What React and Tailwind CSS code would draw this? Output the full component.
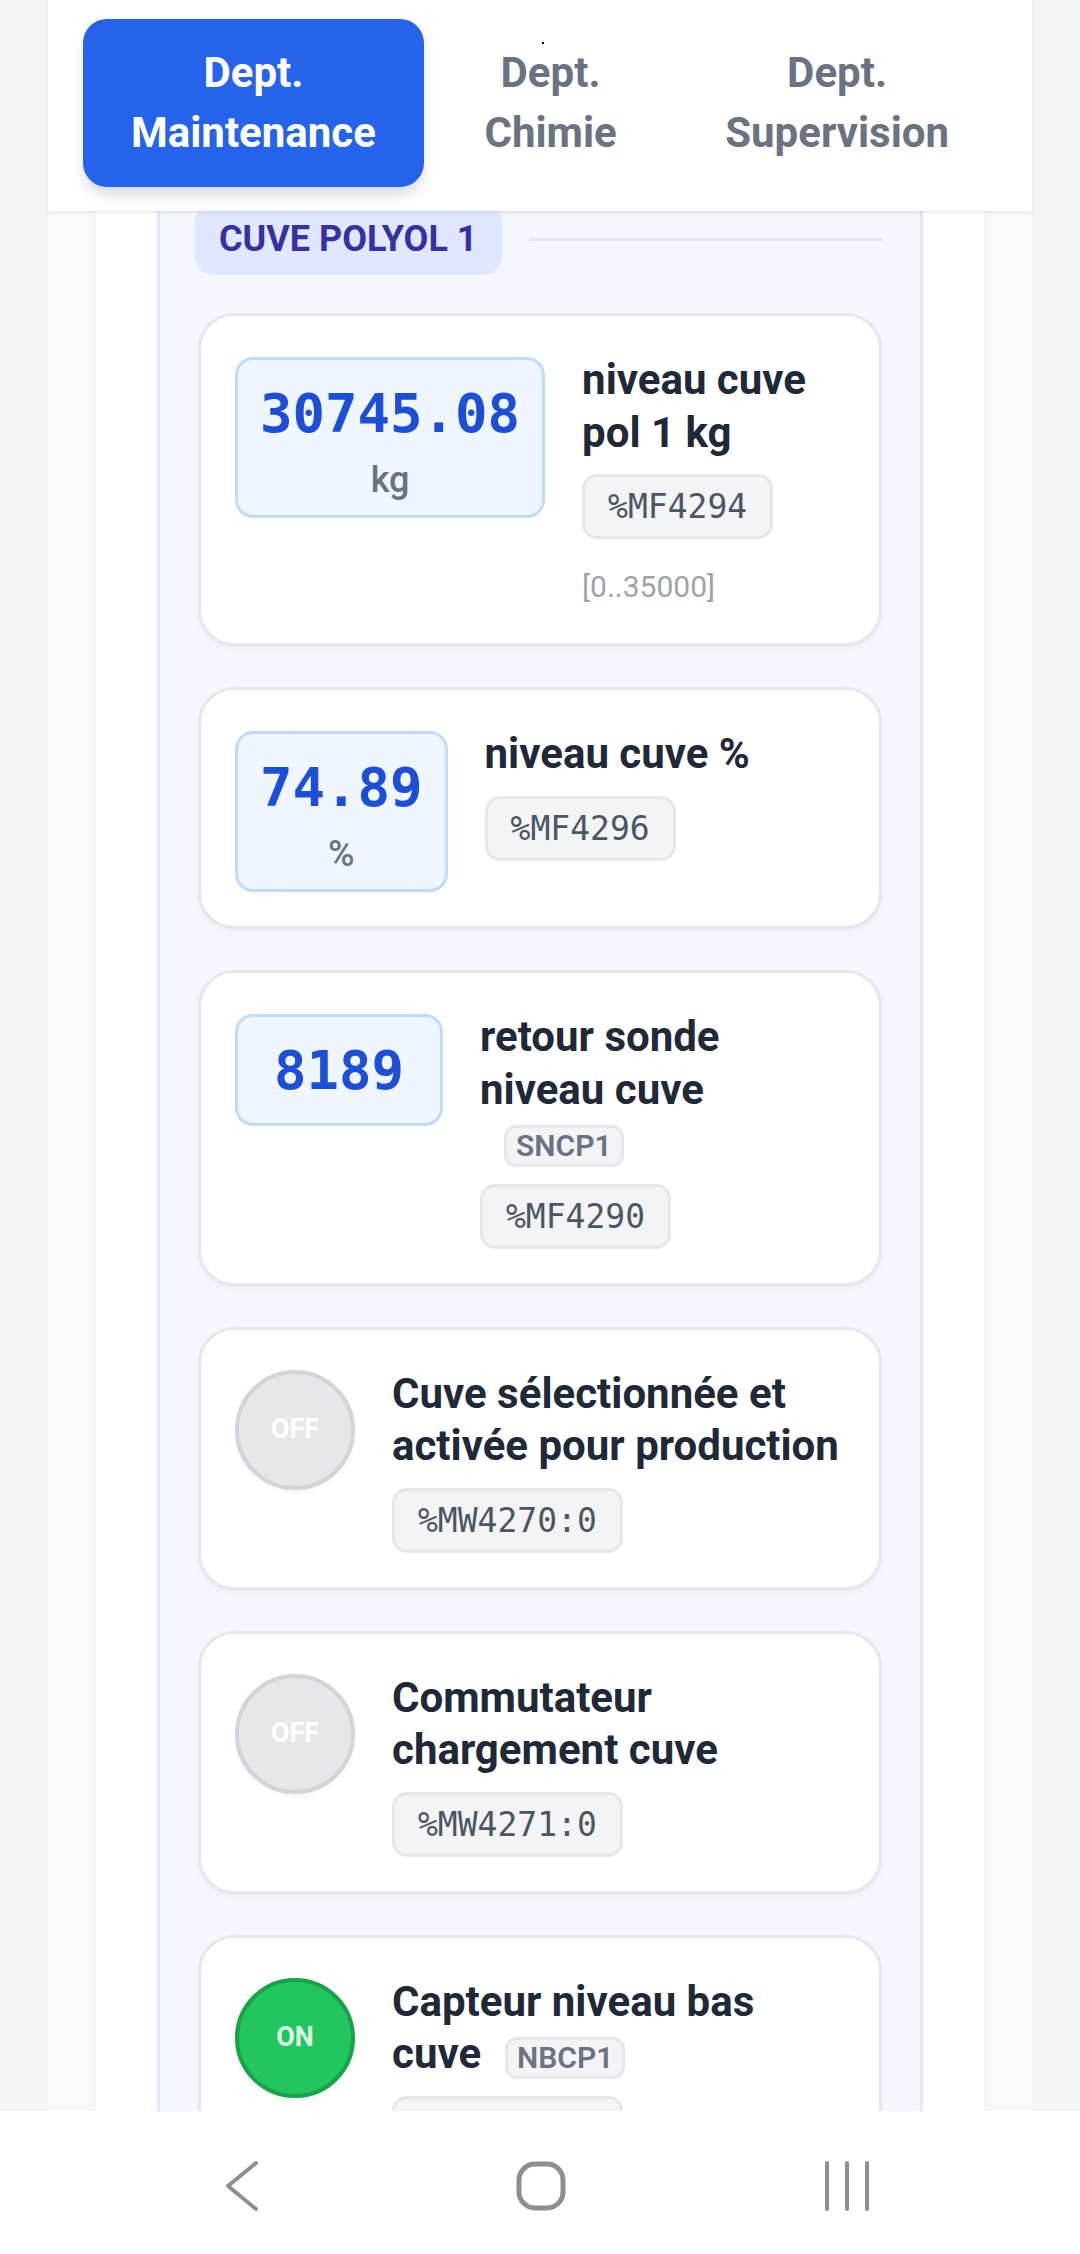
import React from "react";

const MONO = "font-['DejaVu_Sans_Mono',monospace]";

function Addr({ children }) {
  return (
    <span
      className={`inline-block rounded-[15px] border-[3px] border-[#e5e7eb] bg-[#f3f4f6] px-[23px] py-[8px] text-[33px] leading-[43px] text-[#4b5563] ${MONO}`}
    >
      {children}
    </span>
  );
}

function NameTag({ children }) {
  return (
    <span className="ml-[24px] inline-block rounded-[12px] border-[3px] border-[#e5e7eb] bg-[#f3f4f6] px-[9px] text-[30px] leading-[36px] font-semibold text-[#6b7280]">
      {children}
    </span>
  );
}

function Card({ children }) {
  return (
    <div className="flex items-start gap-[37px] rounded-[36px] border-[3px] border-[#e5e7eb] bg-white px-[34px] pt-[38px] pb-[34px] shadow-[0_3px_6px_rgba(0,0,0,0.04)]">
      {children}
    </div>
  );
}

function Info({ label, tag, addr, range }) {
  return (
    <div className="min-w-0 flex-1">
      <div className="text-[42px] leading-[52.5px] font-bold text-[#1f2937]">
        {label}
        {tag && <NameTag>{tag}</NameTag>}
      </div>
      <div className="mt-[15px] flex">
        <Addr>{addr}</Addr>
      </div>
      {range && (
        <div className="mt-[25px] text-[30px] leading-[45px] text-[#9ca3af]">
          {range}
        </div>
      )}
    </div>
  );
}

function ValueCard({ value, unit, label, tag, addr, range }) {
  return (
    <Card>
      <div className="mt-[3px] min-w-[208px] shrink-0 rounded-[18px] border-[3px] border-[#bfdbfe] bg-[#eff6ff] px-[22px] pt-[12px] pb-[10px] text-center">
        <div className={`text-[54px] leading-[84px] font-bold text-[#1d4ed8] ${MONO}`}>
          {value}
        </div>
        {unit && (
          <div className="text-[36px] leading-[49px] font-medium text-[#6b7280]">
            {unit}
          </div>
        )}
      </div>
      <Info label={label} tag={tag} addr={addr} range={range} />
    </Card>
  );
}

function BoolCard({ on, label, tag, addr }) {
  return (
    <Card>
      {on ? (
        <div className="mt-[2px] flex h-[120px] w-[120px] shrink-0 items-center justify-center rounded-full border-[4px] border-[#16a34a] bg-[#22c55e] text-[27px] font-bold text-[#dcfce7] shadow-[0_2px_4px_rgba(0,0,0,0.08)]">
          ON
        </div>
      ) : (
        <div className="mt-[2px] flex h-[120px] w-[120px] shrink-0 items-center justify-center rounded-full border-[4px] border-[#d1d5db] bg-[#e5e7eb] text-[27px] font-bold text-white shadow-[0_2px_4px_rgba(0,0,0,0.05)]">
          OFF
        </div>
      )}
      <Info label={label} tag={tag} addr={addr} />
    </Card>
  );
}

function Tab({ active, line2 }) {
  return (
    <div
      className={
        active
          ? "rounded-[24px] bg-[#2563eb] px-[48px] py-[24px] text-center text-[42px] leading-[60px] font-bold text-white shadow-[0_9px_15px_-3px_rgba(0,0,0,0.18)]"
          : "rounded-[24px] px-[48px] py-[24px] text-center text-[42px] leading-[60px] font-bold text-[#6b7280]"
      }
    >
      Dept.
      <br />
      {line2}
    </div>
  );
}

export default function App() {
  return (
    <div className="flex h-[2254px] flex-col overflow-hidden bg-[#f3f4f6] font-['Roboto',sans-serif]">
      <div className="min-h-0 flex-1 overflow-hidden">
        <div className="mx-[48px] h-full bg-[#f9fafb]">
          <header className="relative z-10 flex justify-between bg-white px-[35px] pt-[19px] pb-[24px] shadow-[0_2px_3px_rgba(0,0,0,0.08)]">
            <Tab active line2="Maintenance" />
            <Tab line2="Chimie" />
            <Tab line2="Supervision" />
            <span className="absolute left-[494px] top-[42px] h-[2px] w-[2px] bg-black" />
          </header>
          <div className="-mt-[8px] px-[48px]">
            <div className="bg-white px-[61px] pb-[200px] shadow-[0_3px_14px_rgba(0,0,0,0.06)]">
              <div className="border-x-[3px] border-[#e0e7ff] bg-[#f5f7ff] px-[38px] pb-[200px]">
                <div className="mb-[38px] flex items-center">
                  <div className="-ml-[3px] rounded-[18px] bg-[#e0e7ff] px-[24px] py-[12px] text-[36px] leading-[48px] font-bold uppercase text-[#3730a3]">
                    Cuve Polyol 1
                  </div>
                  <div className="ml-[27px] h-[3px] flex-1 bg-[#e5e7eb]" />
                </div>
                <div className="flex flex-col gap-[41px]">
                  <ValueCard
                    value="30745.08"
                    unit="kg"
                    label="niveau cuve pol 1 kg"
                    addr="%MF4294"
                    range="[0..35000]"
                  />
                  <ValueCard
                    value="74.89"
                    unit="%"
                    label="niveau cuve %"
                    addr="%MF4296"
                  />
                  <ValueCard
                    value="8189"
                    label="retour sonde niveau cuve"
                    tag="SNCP1"
                    addr="%MF4290"
                  />
                  <BoolCard
                    label="Cuve sélectionnée et activée pour production"
                    addr="%MW4270:0"
                  />
                  <BoolCard label="Commutateur chargement cuve" addr="%MW4271:0" />
                  <BoolCard
                    on
                    label="Capteur niveau bas cuve"
                    tag="NBCP1"
                    addr="%MW4272:0"
                  />
                </div>
              </div>
            </div>
          </div>
        </div>
      </div>
      <nav className="flex h-[143px] shrink-0 items-center justify-between bg-white pt-[7px] pl-[226px] pr-[210px]">
        <svg width="32" height="50" viewBox="0 0 32 50">
          <polyline
            points="30,2 2,25 30,48"
            fill="none"
            stroke="#8f8f8f"
            strokeWidth="4"
            strokeLinecap="round"
            strokeLinejoin="round"
          />
        </svg>
        <svg width="50" height="50" viewBox="0 0 50 50">
          <rect
            x="3"
            y="3"
            width="44"
            height="44"
            rx="16"
            fill="none"
            stroke="#8f8f8f"
            strokeWidth="5"
          />
        </svg>
        <svg width="46" height="50" viewBox="0 0 46 50">
          <line x1="3" y1="2" x2="3" y2="48" stroke="#8f8f8f" strokeWidth="4" strokeLinecap="round" />
          <line x1="23" y1="2" x2="23" y2="48" stroke="#8f8f8f" strokeWidth="4" strokeLinecap="round" />
          <line x1="43" y1="2" x2="43" y2="48" stroke="#8f8f8f" strokeWidth="4" strokeLinecap="round" />
        </svg>
      </nav>
    </div>
  );
}
